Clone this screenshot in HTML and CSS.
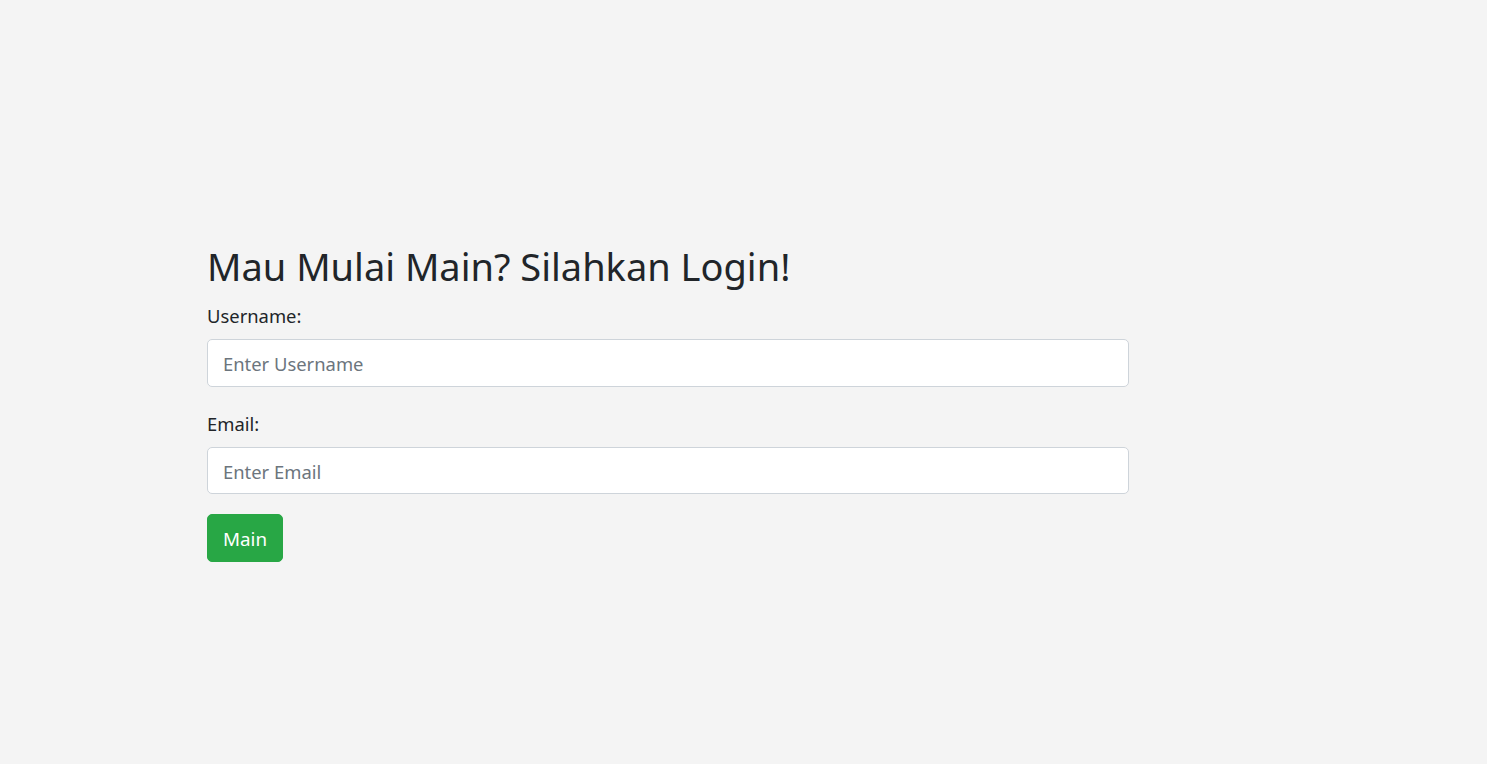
FILE: index.html
```html
<!DOCTYPE html>
<html lang="id">
<head>
<meta charset="utf-8">
<title>Login</title>
<link rel="stylesheet" href="styles.css">
</head>
<body>
<main class="page">
  <div class="wrap">
    <h2 class="title">Mau Mulai Main? Silahkan Login!</h2>
    <form class="login">
      <div class="group">
        <label class="label" for="username">Username:</label>
        <input class="field" type="text" id="username" placeholder="Enter Username">
      </div>
      <div class="group">
        <label class="label" for="email">Email:</label>
        <input class="field" type="email" id="email" placeholder="Enter Email">
      </div>
      <button class="btn" type="button">Main</button>
    </form>
  </div>
</main>
</body>
</html>
```
FILE: styles.css
```css
* { box-sizing: border-box; }
html, body {
  margin: 0;
  padding: 0;
  background: #f4f4f4;
}
body {
  font-family: "Noto Sans", "Open Sans", sans-serif;
  font-size: 18.4px;
  line-height: 1.5;
  color: #212529;
  height: 764px;
  overflow: hidden;
}
.page {
  padding-top: 241px;
  padding-left: 207px;
}
.wrap {
  width: 922px;
}
.title {
  margin: 0 0 10px 0;
  padding-top: 2px;
  height: 48px;
  font-size: 38px;
  font-weight: 400;
  line-height: 46px;
}
.login { display: block; }
.group {
  display: flex;
  flex-direction: column;
  margin-bottom: 20px;
}
.label {
  display: block;
  margin-bottom: 10px;
  height: 30px;
  padding-top: 3px;
  line-height: 27px;
}
.field {
  display: block;
  width: 100%;
  height: 47.5px;
  padding: 0 15px;
  padding-top: 2px;
  font-family: inherit;
  font-size: 18.4px;
  color: #495057;
  background: #fff;
  border: 1px solid #ced4da;
  border-radius: 5px;
  outline: none;
}
.field::placeholder { color: #6c757d; opacity: 1; }
.btn {
  display: inline-block;
  height: 47.5px;
  padding: 2px 15px 0;
  font-family: inherit;
  font-size: 18.8px;
  line-height: 30px;
  color: #fff;
  background: #28a745;
  border: 1px solid #28a745;
  border-radius: 5px;
  cursor: pointer;
}
```
